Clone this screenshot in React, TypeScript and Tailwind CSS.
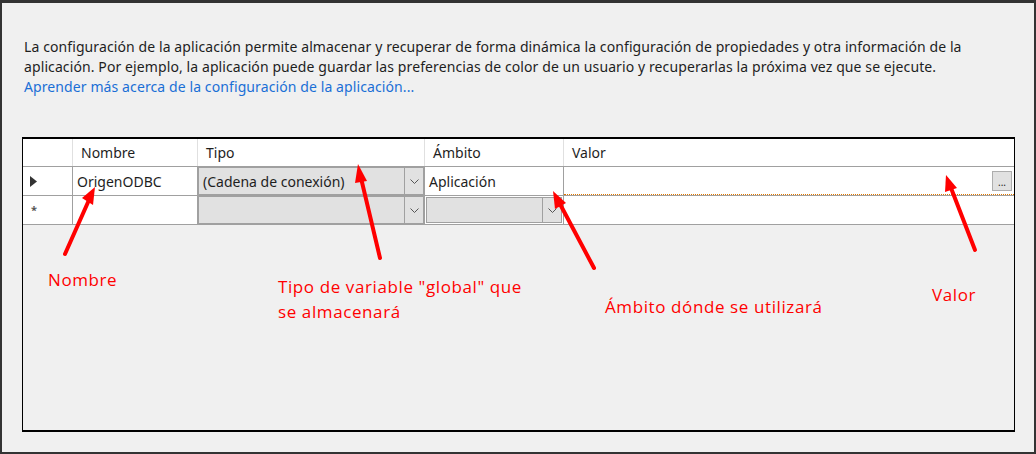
import React from "react";

const Chevron = () => (
  <svg width="9" height="5" viewBox="0 0 9 5" className="block">
    <polyline points="0.5,0.5 4.5,4.5 8.5,0.5" fill="none" stroke="#555" strokeWidth="1" />
  </svg>
);

function Combo({ text }: { text?: string }) {
  return (
    <div className="flex h-full bg-[#e1e1e1] border border-[#a0a0a0] m-0">
      <div className="flex-1 flex items-center pl-[4px] whitespace-nowrap">{text}</div>
      <div className="w-[19px] border-l border-[#a0a0a0] flex items-center justify-center">
        <Chevron />
      </div>
    </div>
  );
}

export default function App() {
  const f = { fontFamily: '"Noto Sans", "Open Sans", sans-serif' };
  return (
    <div
      className="relative w-[1036px] h-[454px] bg-[#f0f0f0] border-[#333333] border-l-2 border-r-2 border-b-2 border-t-[3px] box-border overflow-hidden text-[#1e1e1e]"
      style={f}
    >
      <div className="pl-[22px] pt-[34px] text-[14px] leading-[20px] tracking-[0.1px]">
        <div className="whitespace-nowrap">
          La configuración de la aplicación permite almacenar y recuperar de forma dinámica la configuración de propiedades y otra información de la
        </div>
        <div className="whitespace-nowrap">
          aplicación. Por ejemplo, la aplicación puede guardar las preferencias de color de un usuario y recuperarlas la próxima vez que se ejecute.
        </div>
        <div className="whitespace-nowrap text-[#1a6fd6]">Aprender más acerca de la configuración de la aplicación...</div>
      </div>

      <div className="ml-[20px] mt-[40px] w-[993px] h-[295px] border border-black border-t-2 border-b-2 bg-[#f0f0f0] text-[14px]">
        {/* header */}
        <div className="grid grid-cols-[50px_125px_227px_139px_1fr] h-[28px] bg-white border-b border-[#a0a0a0]">
          <div className="border-r border-[#e0e0e0]" />
          <div className="border-r border-[#e0e0e0] flex items-center pl-[8px]">Nombre</div>
          <div className="border-r border-[#e0e0e0] flex items-center pl-[8px]">Tipo</div>
          <div className="border-r border-[#e0e0e0] flex items-center pl-[8px]">Ámbito</div>
          <div className="flex items-center pl-[8px]">Valor</div>
        </div>
        {/* row 1 */}
        <div className="grid grid-cols-[50px_125px_227px_139px_1fr] h-[29px] bg-white border-b border-[#a0a0a0]">
          <div className="border-r border-[#a0a0a0] flex items-center pl-[7px]">
            <svg width="7" height="11" viewBox="0 0 7 11">
              <polygon points="0,0 7,5.5 0,11" fill="#333" />
            </svg>
          </div>
          <div className="border-r border-[#a0a0a0] flex items-center pl-[4px]">OrigenODBC</div>
          <div className="border-r border-[#a0a0a0]">
            <Combo text="(Cadena de conexión)" />
          </div>
          <div className="border-r border-[#a0a0a0] flex items-center pl-[4px]">Aplicación</div>
          <div className="relative flex items-center justify-end pr-[2px] border-b border-dotted border-[#e07800]">
            <div className="w-[20px] h-[20px] bg-[#e1e1e1] border border-[#adadad] flex items-end justify-center text-[10px] leading-[14px] pb-[1px]">
              ...
            </div>
          </div>
        </div>
        {/* row 2 */}
        <div className="grid grid-cols-[50px_125px_227px_139px_1fr] h-[29px] bg-white border-b border-[#a0a0a0]">
          <div className="border-r border-[#a0a0a0] flex items-center pl-[8px] text-[11px] font-bold text-[#555]">*</div>
          <div className="border-r border-[#a0a0a0]" />
          <div className="border-r border-[#a0a0a0]">
            <Combo />
          </div>
          <div className="border-r border-[#a0a0a0] p-[1px]">
            <Combo />
          </div>
          <div />
        </div>
      </div>

      {/* annotations */}
      <div
        className="absolute inset-0 pointer-events-none text-[#ff0000] text-[17px] tracking-[0.6px]"
        style={{ fontFamily: '"Open Sans", "Noto Sans", sans-serif' }}
      >
        <div className="absolute left-[46px] top-[264px]">Nombre</div>
        <div className="absolute left-[276px] top-[271px] leading-[25px]">
          Tipo de variable "global" que
          <br />
          se almacenará
        </div>
        <div className="absolute left-[603px] top-[291px]">Ámbito dónde se utilizará</div>
        <div className="absolute left-[930px] top-[279px]">Valor</div>
      </div>
      <svg className="absolute left-[-2px] top-[-3px] pointer-events-none" width="1036" height="454">
        <g stroke="#ff0000" strokeWidth="4" strokeLinecap="round">
          <line x1="65" y1="254" x2="89" y2="200" />
          <line x1="380" y1="258" x2="361" y2="178" />
          <line x1="594" y1="268" x2="560" y2="204" />
          <line x1="975" y1="250" x2="951" y2="188" />
        </g>
        <g fill="#ff0000">
          <polygon points="95,187 93,205 82,198" />
          <polygon points="358,164 367,181 355,183" />
          <polygon points="553,191 566,203 555,209" />
          <polygon points="946,175 957,188 945,192" />
        </g>
      </svg>
    </div>
  );
}
